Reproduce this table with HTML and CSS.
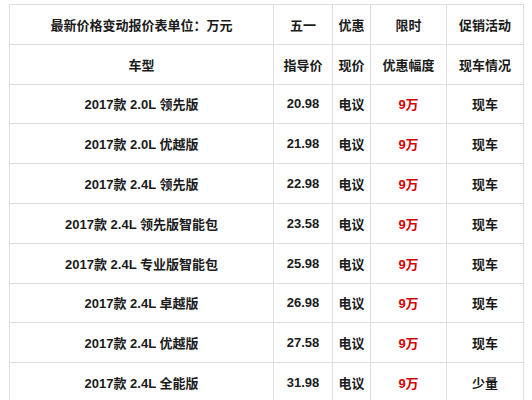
FILE: index.html
```html
<!DOCTYPE html>
<html lang="zh">
<head>
<meta charset="utf-8">
<link rel="stylesheet" href="styles.css">
</head>
<body>
<table class="price-table">
  <colgroup>
    <col class="c-model">
    <col class="c-guide">
    <col class="c-now">
    <col class="c-off">
    <col class="c-stock">
  </colgroup>
  <tr><td>最新价格变动报价表单位：万元</td><td>五一</td><td>优惠</td><td>限时</td><td>促销活动</td></tr>
  <tr><td>车型</td><td>指导价</td><td>现价</td><td>优惠幅度</td><td>现车情况</td></tr>
  <tr><td>2017款 2.0L 领先版</td><td>20.98</td><td>电议</td><td class="red">9万</td><td>现车</td></tr>
  <tr><td>2017款 2.0L 优越版</td><td>21.98</td><td>电议</td><td class="red">9万</td><td>现车</td></tr>
  <tr><td>2017款 2.4L 领先版</td><td>22.98</td><td>电议</td><td class="red">9万</td><td>现车</td></tr>
  <tr><td>2017款 2.4L 领先版智能包</td><td>23.58</td><td>电议</td><td class="red">9万</td><td>现车</td></tr>
  <tr><td>2017款 2.4L 专业版智能包</td><td>25.98</td><td>电议</td><td class="red">9万</td><td>现车</td></tr>
  <tr><td>2017款 2.4L 卓越版</td><td>26.98</td><td>电议</td><td class="red">9万</td><td>现车</td></tr>
  <tr><td>2017款 2.4L 优越版</td><td>27.58</td><td>电议</td><td class="red">9万</td><td>现车</td></tr>
  <tr><td>2017款 2.4L 全能版</td><td>31.98</td><td>电议</td><td class="red">9万</td><td>少量</td></tr>
</table>
</body>
</html>
```
FILE: styles.css
```css
html, body {
  background: #ffffff;
}
body {
  margin: 4px 0 0 9px;
  font-family: "Liberation Sans", "Noto Sans CJK SC", sans-serif;
  font-size: 13px;
  font-weight: bold;
  color: #1a1a1a;
}
.price-table {
  border-collapse: collapse;
  table-layout: fixed;
  width: 515px;
}
.c-model { width: 264px; }
.c-guide { width: 59px; }
.c-now { width: 38px; }
.c-off { width: 76px; }
.c-stock { width: 77px; }
.price-table td {
  border: 1px solid #dedede;
  height: 38.8px;
  padding: 0;
  text-align: center;
  vertical-align: middle;
  white-space: nowrap;
}
.price-table td.red {
  color: #d40000;
}
```
